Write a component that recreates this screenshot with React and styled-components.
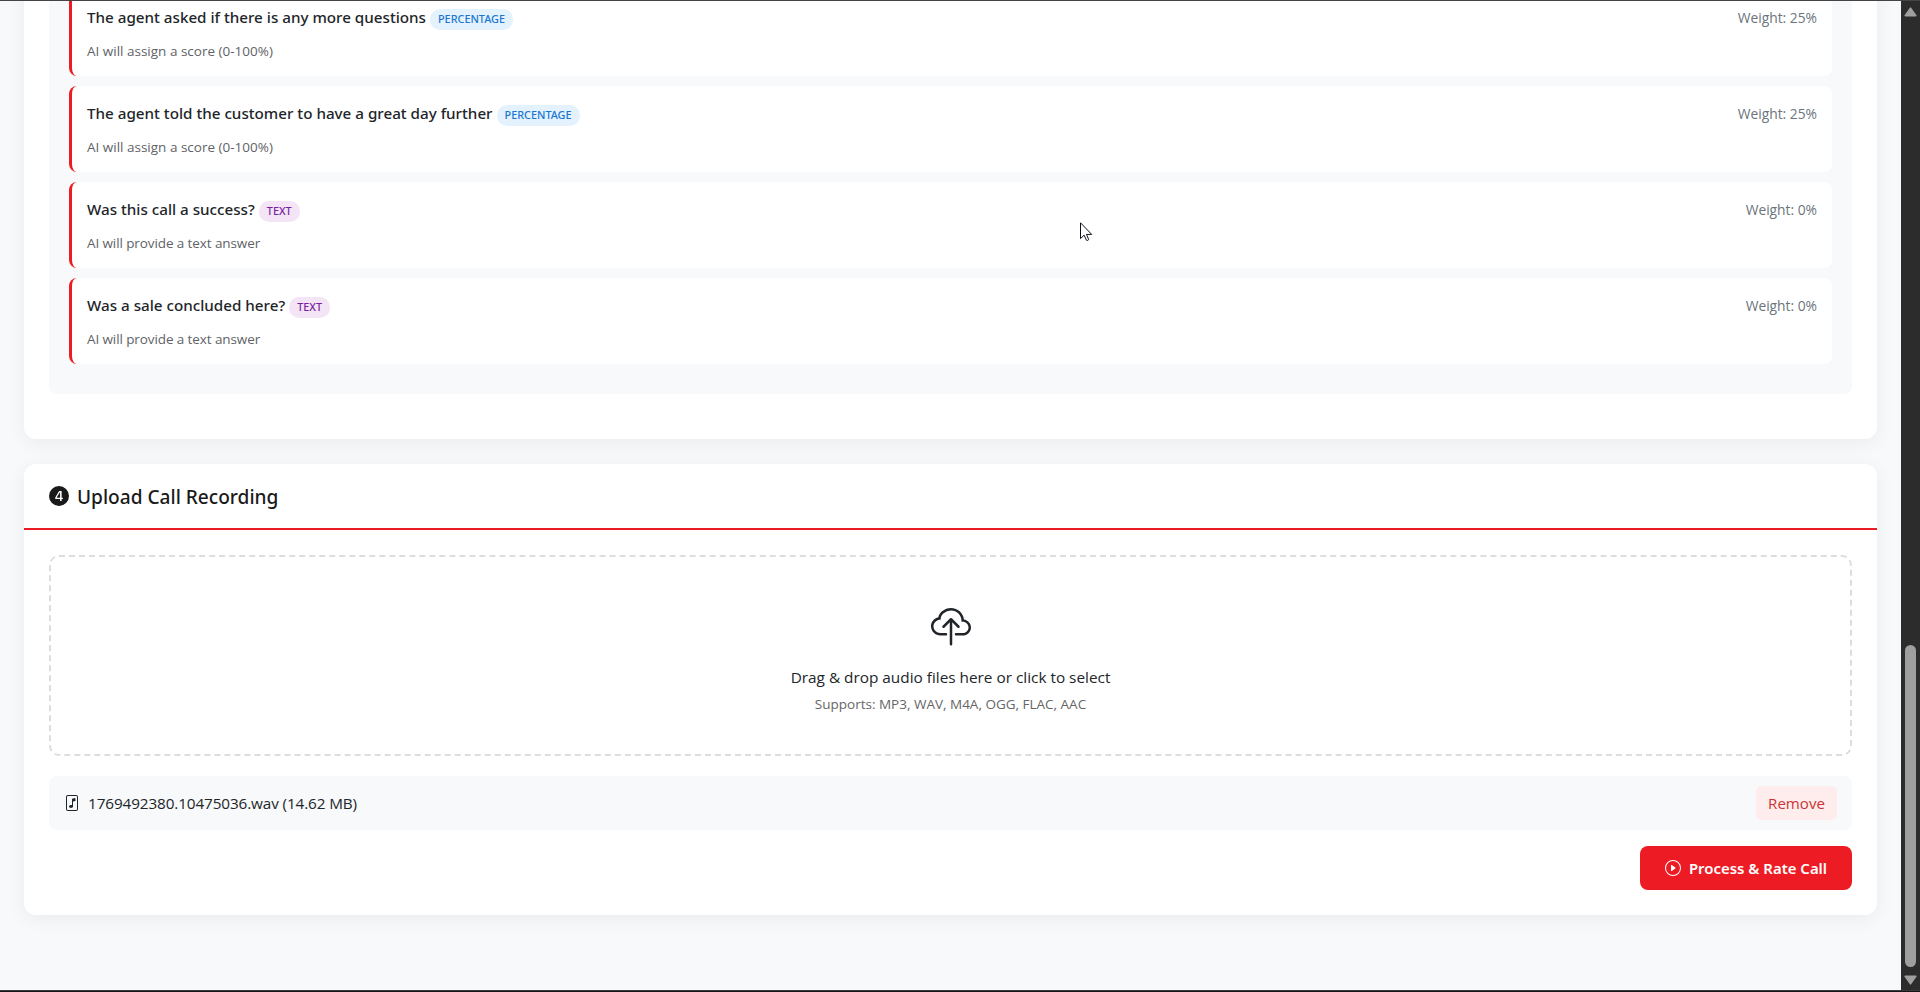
import React from "react";
import styled, { createGlobalStyle } from "styled-components";
import {
  Bs4CircleFill,
  BsCloudUpload,
  BsFileMusic,
  BsPlayCircle,
} from "react-icons/bs";

const questions = [
  {
    title: "The agent asked if there is any more questions",
    type: "percentage",
    weight: 25,
  },
  {
    title: "The agent told the customer to have a great day further",
    type: "percentage",
    weight: 25,
  },
  { title: "Was this call a success?", type: "text", weight: 0 },
  { title: "Was a sale concluded here?", type: "text", weight: 0 },
];

const hints = {
  percentage: "AI will assign a score (0-100%)",
  text: "AI will provide a text answer",
};

const App = () => {
  return (
    <Screen>
      <GlobalStyle />
      <Body>
        <Content>
          <Card>
            <CardBody $bottom={45}>
              <QuestionPanel>
                {questions.map((q) => (
                  <Question key={q.title}>
                    <QuestionHead>
                      <QuestionTitle>{q.title}</QuestionTitle>
                      <Badge $type={q.type}>{q.type}</Badge>
                      <Weight>Weight: {q.weight}%</Weight>
                    </QuestionHead>
                    <Hint $type={q.type}>{hints[q.type]}</Hint>
                  </Question>
                ))}
              </QuestionPanel>
            </CardBody>
          </Card>

          <Card>
            <CardHeader>
              <Bs4CircleFill size={20} />
              <Heading>Upload Call Recording</Heading>
            </CardHeader>
            <CardBody $bottom={25}>
              <DropZone>
                <BsCloudUpload size={40} />
                <DropText>Drag &amp; drop audio files here or click to select</DropText>
                <DropHint>Supports: MP3, WAV, M4A, OGG, FLAC, AAC</DropHint>
              </DropZone>
              <FileRow>
                <BsFileMusic size={16} />
                <FileName>1769492380.10475036.wav (14.62 MB)</FileName>
                <RemoveButton>Remove</RemoveButton>
              </FileRow>
              <Actions>
                <ProcessButton>
                  <BsPlayCircle size={16} />
                  Process &amp; Rate Call
                </ProcessButton>
              </Actions>
            </CardBody>
          </Card>
        </Content>

        <Scrollbar>
          <svg width="13" height="10" viewBox="0 0 13 10">
            <path
              d="M6.5 1.2 11.8 8.6H1.2Z"
              fill="#9f9f9f"
              stroke="#9f9f9f"
              strokeWidth="1.6"
              strokeLinejoin="round"
            />
          </svg>
          <Thumb />
          <svg width="13" height="10" viewBox="0 0 13 10">
            <path
              d="M6.5 8.8 1.2 1.4H11.8Z"
              fill="#9f9f9f"
              stroke="#9f9f9f"
              strokeWidth="1.6"
              strokeLinejoin="round"
            />
          </svg>
        </Scrollbar>
      </Body>

      <Cursor width="13" height="20" viewBox="0 0 13 20">
        <path
          d="M.5 .8V16.6L4.1 13.2 6.5 18.3Q7.6 19 8.7 17.6L6.5 12.4H11.7Z"
          fill="#fff"
          stroke="#10101c"
          strokeWidth="1"
        />
      </Cursor>
    </Screen>
  );
};

export default App;

const GlobalStyle = createGlobalStyle`
  * {
    box-sizing: border-box;
  }
  body {
    margin: 0;
    overflow: hidden;
    color: #212529;
    font-family: "Open Sans", "Noto Sans", sans-serif;
  }
  button {
    border: none;
    font-family: inherit;
    cursor: pointer;
  }
  svg {
    flex-shrink: 0;
  }
`;

const Screen = styled.div`
  position: relative;
  display: flex;
  flex-direction: column;
  width: 1920px;
  height: 992px;
  border-top: 1px solid #444446;
  border-bottom: 1px solid #161616;
  overflow: hidden;
`;

const Body = styled.div`
  flex: 1;
  min-height: 0;
  display: flex;
  border-bottom: 1px solid #3a3a3c;
  background: #f8f9fb;
`;

/* scrolled to the end, so the cards sit against the bottom */
const Content = styled.div`
  flex: 1;
  display: flex;
  flex-direction: column;
  justify-content: flex-end;
  gap: 25px;
  padding: 0 24px 75px;
  overflow: hidden;
`;

const Card = styled.section`
  flex-shrink: 0;
  border-radius: 12px;
  background: #fff;
  box-shadow: 0 4px 20px rgba(0, 0, 0, 0.06);
`;

const CardHeader = styled.div`
  display: flex;
  align-items: center;
  gap: 8px;
  height: 66px;
  padding: 0 25px;
  border-bottom: 2px solid #ed1c24;
  color: #1a1a1a;
`;

const Heading = styled.h2`
  margin: 2px 0 0 0;
  font-family: "Noto Sans", sans-serif;
  font-size: 19.1px;
  font-weight: 500;
  line-height: 26px;
`;

const CardBody = styled.div`
  padding: 25px 25px ${({ $bottom }) => $bottom}px;
`;

const QuestionPanel = styled.div`
  display: flex;
  flex-direction: column;
  gap: 10px;
  padding: 20px 20px 30px;
  border-radius: 8px;
  background: #f8f9fb;
`;

const Question = styled.div`
  height: 86px;
  padding: 15px;
  border-left: 3px solid #ed1c24;
  border-radius: 8px;
  background: #fff;
`;

const QuestionHead = styled.div`
  display: flex;
  align-items: flex-start;
  height: 24px;
  margin: 0 0 12px 0;
`;

const QuestionTitle = styled.span`
  font-family: "Noto Sans", sans-serif;
  font-size: 15.2px;
  font-weight: 500;
  line-height: 24px;
`;

const Badge = styled.span`
  height: 21px;
  margin: 4px 0 0 4px;
  padding: 0 8px;
  border-radius: 10px;
  font-family: "Noto Sans", sans-serif;
  font-size: 10.85px;
  font-weight: 500;
  line-height: 20px;
  text-transform: uppercase;
  color: ${({ $type }) => ($type === "text" ? "#7b1fa2" : "#1976d2")};
  background: ${({ $type }) => ($type === "text" ? "#f3e5f5" : "#e3f2fd")};
`;

const Weight = styled.span`
  margin-left: auto;
  font-size: 13.8px;
  line-height: 26px;
  color: #6c757d;
`;

const Hint = styled.div`
  font-size: 13.5px;
  line-height: 20px;
  letter-spacing: ${({ $type }) => ($type === "text" ? "-0.1px" : "0")};
  color: #5f6368;
`;

const DropZone = styled.div`
  display: flex;
  flex-direction: column;
  align-items: center;
  height: 201px;
  padding: 51px 0 0 0;
  border: 2px dashed #ddd;
  border-radius: 10px;
`;

const DropText = styled.div`
  margin: 17px 0 5px 0;
  font-size: 15.35px;
  line-height: 24px;
`;

const DropHint = styled.div`
  font-size: 13.5px;
  line-height: 20px;
  color: #666;
`;

const FileRow = styled.div`
  display: flex;
  align-items: center;
  height: 54px;
  margin: 20px 0 16px 0;
  padding: 0 15px;
  border-radius: 8px;
  background: #f8f9fb;
`;

const FileName = styled.span`
  margin: 0 auto 0 8px;
  font-size: 15.3px;
  letter-spacing: -0.12px;
`;

const RemoveButton = styled.button`
  width: 81px;
  height: 34px;
  padding: 0;
  border-radius: 5px;
  background: #ffeded;
  color: #cc3333;
  font-size: 15.1px;
`;

const Actions = styled.div`
  display: flex;
  justify-content: flex-end;
`;

const ProcessButton = styled.button`
  display: flex;
  align-items: center;
  justify-content: center;
  gap: 8px;
  width: 212px;
  height: 44px;
  padding: 0;
  border-radius: 8px;
  background: #ed1c24;
  color: #fff;
  font-family: "Noto Sans", sans-serif;
  font-size: 14.95px;
  font-weight: 600;
`;

const Scrollbar = styled.div`
  display: flex;
  flex-direction: column;
  align-items: center;
  justify-content: space-between;
  width: 19px;
  padding: 6px 0 5px 0;
  background: #2c2c2c;
`;

const Thumb = styled.div`
  width: 11px;
  height: 322px;
  margin: auto 0 8px 0;
  border-radius: 6px;
  background: #9f9f9f;
`;

const Cursor = styled.svg`
  position: absolute;
  left: 1080px;
  top: 221px;
`;
